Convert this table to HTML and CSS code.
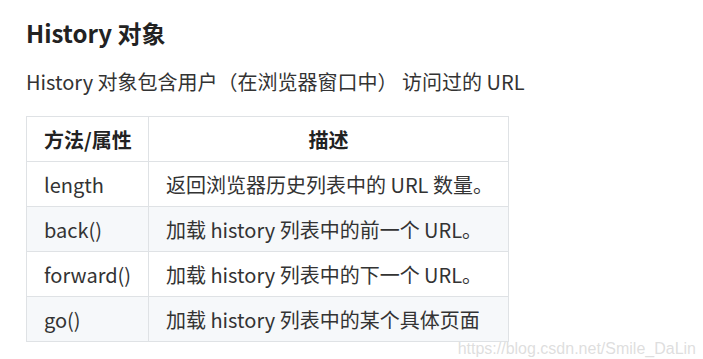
FILE: index.html
```html
<!DOCTYPE html>
<html lang="zh">
<head>
<meta charset="utf-8">
<link rel="stylesheet" href="styles.css">
</head>
<body>
<main class="doc">
  <h3 class="title">History 对象</h3>
  <p class="intro">History 对象包含用户（在浏览器窗口中） 访问过的 URL</p>
  <table class="tbl">
    <colgroup><col class="col1"><col class="col2"></colgroup>
    <thead>
      <tr><th class="c1">方法/属性</th><th class="c2">描述</th></tr>
    </thead>
    <tbody>
      <tr><td>length</td><td>返回浏览器历史列表中的 URL 数量。</td></tr>
      <tr><td>back()</td><td>加载 history 列表中的前一个 URL。</td></tr>
      <tr><td>forward()</td><td>加载 history 列表中的下一个 URL。</td></tr>
      <tr><td>go()</td><td>加载 history 列表中的某个具体页面</td></tr>
    </tbody>
  </table>
  <div class="watermark">https://blog.csdn.net/Smile_DaLin</div>
</main>
</body>
</html>
```
FILE: styles.css
```css
html, body { margin: 0; padding: 0; background: #fff; }
body {
  font-family: "Noto Sans CJK SC", "Noto Sans", sans-serif;
  color: #2c2c2c;
  width: 703px;
  height: 359px;
  overflow: hidden;
}
.doc { position: relative; padding: 16px 0 0 26px; height: 343px; }
.title {
  margin: 0;
  font-size: 24px;
  font-weight: 700;
  line-height: 34px;
  color: #222;
}
.intro {
  margin: 17px 0 0 0;
  font-size: 20px;
  line-height: 30px;
  color: #333;
}
.tbl {
  margin-top: 19px;
  border-collapse: collapse;
  table-layout: fixed;
  width: 482px;
  font-size: 20px;
  color: #333;
}
.col1 { width: 122px; }
.col2 { width: 360px; }
.tbl th, .tbl td {
  border: 1px solid #dfe2e5;
  height: 45px;
  padding: 0 17px;
  text-align: left;
  white-space: nowrap;
  box-sizing: border-box;
}
.tbl th { font-weight: 700; color: #222; }
.tbl th.c2 { text-align: center; }
.tbl tbody tr:nth-child(even) { background: #f6f8fa; }
.watermark {
  position: absolute;
  right: 7px;
  bottom: 1px;
  font-family: "Liberation Sans", Arial, sans-serif;
  font-size: 16px;
  color: rgba(200, 200, 200, 0.6);
}
```
